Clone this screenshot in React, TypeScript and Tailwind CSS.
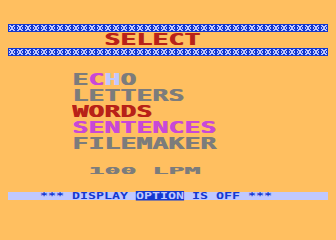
import React from 'react';

// Atari-style screen: 320px playfield starting at x=8
const mode2 = "block origin-top-left scale-x-[1.611] whitespace-pre font-bold text-[16.5px] leading-[16px] [text-shadow:0.6px_0_0_currentColor] font-['DejaVu_Sans_Mono',monospace]";
const mode1 = "block origin-top-left scale-x-[1.611] scale-y-50 whitespace-pre font-bold text-[16.5px] leading-[16px] [text-shadow:0.6px_0_0_currentColor] font-['DejaVu_Sans_Mono',monospace]";
const mode0 = "block origin-top-left scale-x-[0.805] scale-y-50 whitespace-pre font-bold text-[16.5px] leading-[16px] font-['DejaVu_Sans_Mono',monospace]";

// light = 1
const tile = [
  '00000000',
  '01100110',
  '00111100',
  '01011010',
  '01011010',
  '00111100',
  '01100110',
  '00000000',
];

const Band: React.FC<{ id: string }> = ({ id }) => (
  <svg width="320" height="8" className="block mx-2 shrink-0" shapeRendering="crispEdges">
    <defs>
      <pattern id={id} width="8" height="8" patternUnits="userSpaceOnUse">
        <rect width="8" height="8" fill="#1438d0" />
        {tile.map((row, y) =>
          row.split('').map((c, x) =>
            c === '1' ? <rect key={`${x}-${y}`} x={x} y={y} width="1" height="1" fill="#c0c8ff" /> : null
          )
        )}
      </pattern>
    </defs>
    <rect width="320" height="8" fill={`url(#${id})`} />
  </svg>
);

const Row: React.FC<{ col: number; children: React.ReactNode }> = ({ col, children }) => (
  <div className="h-4 mx-2 flex items-start shrink-0" style={{ paddingLeft: col * 16 }}>
    {children}
  </div>
);

export default function App() {
  return (
    <div className="w-[336px] h-[240px] bg-[#ffbf60] pt-6 flex flex-col overflow-hidden">
      <Band id="bandTop" />
      <Row col={6}>
        <span className={`${mode2} text-[#b82218]`}>SELECT</span>
      </Row>
      <Band id="bandBottom" />
      <div className="h-4 shrink-0" />
      <Row col={4}>
        <span className={`${mode2} text-[#7c7c7c]`}>
          E<span className="text-[#c848d8]">C</span>
          <span className="text-[#c0c8ff]">H</span>O
        </span>
      </Row>
      <Row col={4}>
        <span className={`${mode2} text-[#7c7c7c]`}>LETTERS</span>
      </Row>
      <Row col={4}>
        <span className={`${mode2} text-[#b82218]`}>WORDS</span>
      </Row>
      <Row col={4}>
        <span className={`${mode2} text-[#c848d8]`}>SENTENCES</span>
      </Row>
      <Row col={4}>
        <span className={`${mode2} text-[#7c7c7c]`}>FILEMAKER</span>
      </Row>
      <div className="h-[15px] shrink-0" />
      <div className="h-2 mx-2 pl-20 flex items-start shrink-0">
        <span className={`${mode1} text-[#7c7c7c]`}>100 LPM</span>
      </div>
      <div className="h-[17px] shrink-0" />
      <div className="h-2 mx-2 pl-8 bg-[#c0c8ff] flex items-start shrink-0">
        <span className={`${mode0} text-[#1438d0]`}>
          *** DISPLAY <span className="bg-[#1438d0] text-[#c0c8ff]">OPTION</span> IS OFF ***
        </span>
      </div>
    </div>
  );
}
